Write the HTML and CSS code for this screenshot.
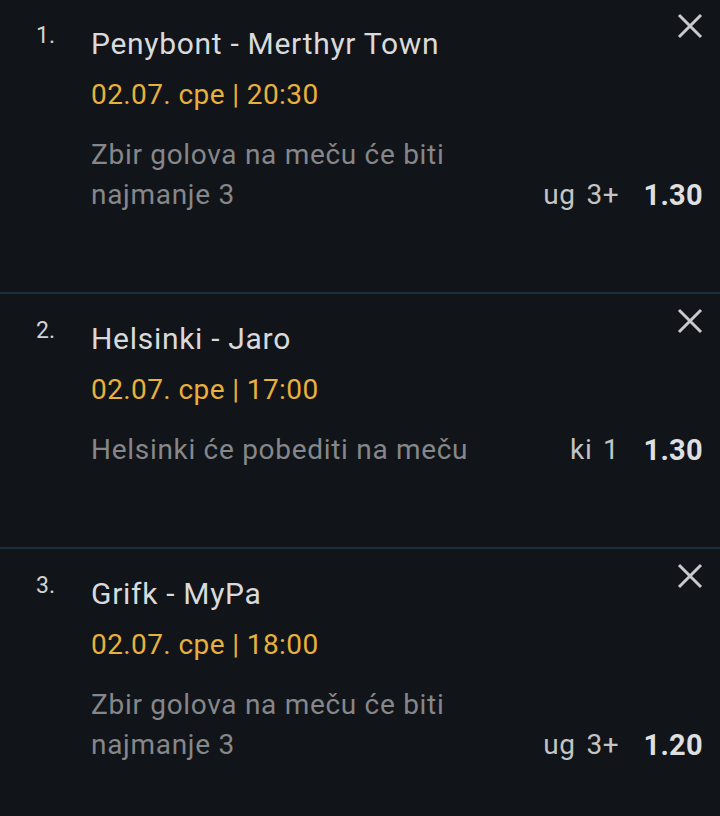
FILE: index.html
```html
<!DOCTYPE html>
<html lang="sr">

<head>
    <meta charset="UTF-8">
    <meta name="viewport" content="width=device-width, initial-scale=1.0">
    <title>Tiket</title>
    <link rel="stylesheet" href="styles.css">
</head>

<body>
    <ul class="slip">
        <li class="item">
            <div class="num">1.</div>
            <div class="main">
                <div class="head">
                    <div class="title">Penybont - Merthyr Town</div>
                    <div class="close">
                        <svg width="26" height="26" viewBox="0 0 26 26"><path d="M2 2 L24 24 M24 2 L2 24" /></svg>
                    </div>
                </div>
                <div class="date">02.07. cpe | 20:30</div>
                <div class="bet">
                    <div class="desc">Zbir golova na meču će biti najmanje 3</div>
                    <div class="pick">ug 3+</div>
                    <div class="odds">1.30</div>
                </div>
            </div>
        </li>
        <li class="item">
            <div class="num">2.</div>
            <div class="main">
                <div class="head">
                    <div class="title">Helsinki - Jaro</div>
                    <div class="close">
                        <svg width="26" height="26" viewBox="0 0 26 26"><path d="M2 2 L24 24 M24 2 L2 24" /></svg>
                    </div>
                </div>
                <div class="date">02.07. cpe | 17:00</div>
                <div class="bet">
                    <div class="desc">Helsinki će pobediti na meču</div>
                    <div class="pick">ki 1</div>
                    <div class="odds">1.30</div>
                </div>
            </div>
        </li>
        <li class="item">
            <div class="num">3.</div>
            <div class="main">
                <div class="head">
                    <div class="title">Grifk - MyPa</div>
                    <div class="close">
                        <svg width="26" height="26" viewBox="0 0 26 26"><path d="M2 2 L24 24 M24 2 L2 24" /></svg>
                    </div>
                </div>
                <div class="date">02.07. cpe | 18:00</div>
                <div class="bet">
                    <div class="desc">Zbir golova na meču će biti najmanje 3</div>
                    <div class="pick">ug 3+</div>
                    <div class="odds">1.20</div>
                </div>
            </div>
        </li>
    </ul>
</body>

</html>
```

FILE: styles.css
```css
html,
body {
    margin: 0;
    background-color: #111418;
}

body {
    font-family: Roboto, "Noto Sans", sans-serif;
    letter-spacing: 0.7px;
    overflow: hidden;
}

.slip {
    margin: -1px 0 0;
    padding: 0;
}

.item {
    list-style: none;
    display: flex;
    padding: 23px 17px 77px 36px;
    border-bottom: 2px solid #1a2f3b;
}

.num {
    width: 55px;
    flex-shrink: 0;
    font-size: 23px;
    line-height: 28px;
    color: #d2d3d4;
    letter-spacing: 0;
}

.main {
    flex: 1;
}

.head {
    display: flex;
    justify-content: space-between;
    align-items: flex-start;
}

.title {
    font-size: 30px;
    line-height: 44px;
    color: #d9dadb;
}

.close {
    margin-top: -9px;
}

.close svg {
    display: block;
}

.close path {
    stroke: #c9cacb;
    stroke-width: 3;
    fill: none;
}

.date {
    margin-top: 9px;
    font-size: 28px;
    line-height: 40px;
    letter-spacing: 0.4px;
    color: #e8b03c;
}

.bet {
    display: flex;
    align-items: flex-end;
    margin-top: 20px;
}

.desc {
    flex: 1;
    padding-right: 20px;
    font-size: 28px;
    line-height: 40px;
    color: #85878a;
}

.pick {
    font-size: 28px;
    line-height: 40px;
    word-spacing: 3px;
    color: #c3c4c5;
    margin-right: 24px;
}

.odds {
    font-size: 29px;
    line-height: 40px;
    font-weight: bold;
    letter-spacing: 0.3px;
    color: #dedfe0;
}
```
